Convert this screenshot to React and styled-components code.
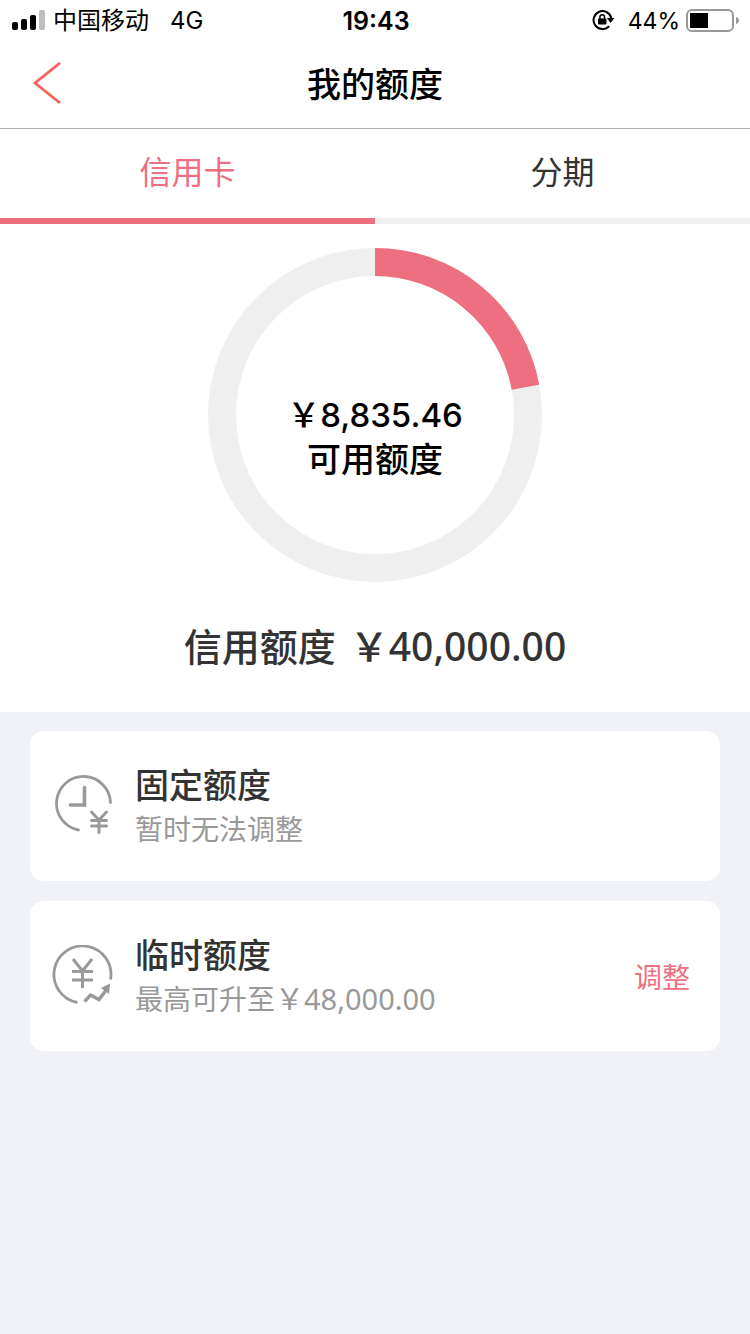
import React, { useState } from "react";
import styled, { createGlobalStyle } from "styled-components";

const GlobalStyle = createGlobalStyle`
  * {
    box-sizing: border-box;
  }
  body {
    margin: 0;
    background-color: #f1f2f7;
    font-family: "Noto Sans", "Noto Sans CJK SC", sans-serif;
  }
  button {
    padding: 0;
    border: none;
    background: none;
    font-family: inherit;
    cursor: pointer;
  }
`;

const Page = styled.div`
  display: flex;
  flex-direction: column;
`;

const StatusBar = styled.div`
  display: grid;
  grid-template-columns: 1fr auto 1fr;
  align-items: center;
  height: 40px;
  padding: 0 10px 0 12px;
  background-color: white;
  color: black;
  font-family: "Inter", "Noto Sans CJK SC", sans-serif;
  font-size: 24px;
  line-height: 42px;
`;

const StatusGroup = styled.div`
  display: flex;
  align-items: center;
  gap: ${(props) => (props.$right ? 6 : 7)}px;
  justify-content: ${(props) => (props.$right ? "flex-end" : "flex-start")};
`;

const Carrier = styled.span`
  margin-right: 14px;
`;

const Clock = styled.span`
  font-size: 25px;
  font-weight: 600;
`;

const Percent = styled.span`
  margin-left: 6px;
  font-size: 23px;
`;

const NavBar = styled.header`
  display: grid;
  grid-template-columns: 1fr auto 1fr;
  align-items: center;
  height: 89px;
  padding: 0 32px;
  background-color: white;
  border-bottom: 1px solid #b2b2b2;
`;

const BackButton = styled.button`
  display: flex;
  width: 30px;
`;

const Title = styled.h1`
  margin: 0;
  color: black;
  font-size: 34px;
  font-weight: 500;
  line-height: 48px;
`;

const Tabs = styled.nav`
  display: flex;
  background-color: white;
`;

const Tab = styled.button`
  flex: 1;
  height: 95px;
  padding-bottom: 4px;
  border-bottom: 6px solid ${(props) => (props.$active ? "#ee6f80" : "#f0f0f0")};
  color: ${(props) => (props.$active ? "#ee6f80" : "#333333")};
  font-size: 32px;
  line-height: 44px;
`;

const Summary = styled.section`
  display: flex;
  flex-direction: column;
  align-items: center;
  gap: 36px;
  padding: 24px 0 38px;
  background-color: white;
`;

const Ring = styled.div`
  display: grid;
  place-items: center;
`;

const RingChart = styled.svg`
  grid-area: 1 / 1;
  display: block;
`;

const RingText = styled.div`
  grid-area: 1 / 1;
  display: flex;
  flex-direction: column;
  align-items: center;
  padding-top: 44px;
  color: black;
  font-size: 34px;
  font-weight: 500;
  line-height: 44px;
`;

const Available = styled.span`
  font-family: "Inter", "Noto Sans CJK SC", sans-serif;
  font-size: 33px;
`;

const Total = styled.div`
  display: flex;
  align-items: center;
  gap: 14px;
  color: #333333;
  font-size: 38px;
  font-weight: 500;
  line-height: 56px;
`;

const Amount = styled.span`
  font-size: 39px;
`;

const CardList = styled.main`
  display: flex;
  flex-direction: column;
  gap: 20px;
  padding: 19px 30px;
`;

const Card = styled.article`
  display: flex;
  align-items: center;
  gap: 21px;
  height: 150px;
  padding: 2px 30px 0 20px;
  background-color: white;
  border-radius: 14px;
`;

const CardBody = styled.div`
  flex: 1;
`;

const CardTitle = styled.h2`
  margin: 0;
  color: #333333;
  font-size: 34px;
  font-weight: 500;
  line-height: 44px;
`;

const CardNote = styled.p`
  margin: 0;
  color: #999999;
  font-size: 28px;
  line-height: 44px;
`;

const NoteAmount = styled.span`
  font-size: 29px;
`;

const AdjustButton = styled.button`
  color: #ee6f80;
  font-size: 28px;
  line-height: 44px;
`;

const SignalIcon = () => (
  <svg width="34" height="22" viewBox="0 0 34 22">
    <rect x="0" y="12" width="6" height="8" rx="2" />
    <rect x="9" y="9" width="6" height="11" rx="2" />
    <rect x="18" y="5" width="6" height="15" rx="2" />
    <rect x="27" y="0" width="6" height="20" rx="2" fill="#bfbfbf" />
  </svg>
);

const RotationLockIcon = () => (
  <svg width="24" height="22" viewBox="0 0 24 22" fill="none" stroke="black" strokeWidth="2">
    <path d="M17.2 16.2A9 9 0 1 1 19.3 8" />
    <path d="M14.8 8h7.6l-3.8 5z" fill="black" stroke="none" />
    <rect x="6" y="8.5" width="8.4" height="6" rx="1" fill="black" stroke="none" />
    <path d="M7.9 9V7a2.3 2.3 0 0 1 4.6 0v2" strokeWidth="1.5" />
  </svg>
);

const BatteryIcon = () => (
  <svg width="54" height="24" viewBox="0 0 54 24">
    <rect x="1" y="1" width="46" height="21" rx="5" fill="none" stroke="#999999" strokeWidth="2" />
    <rect x="4" y="4" width="18" height="15" fill="black" />
    <path d="M50 8c4 1 4 6 0 7z" fill="#999999" />
  </svg>
);

const BackIcon = () => (
  <svg width="30" height="44" viewBox="0 0 30 44" fill="none" stroke="#f9605b" strokeWidth="2.8">
    <path d="M28 1L3 21l25 20" />
  </svg>
);

const FixedIcon = () => (
  <svg width="64" height="64" viewBox="0 0 64 64" fill="none" stroke="#999999" strokeWidth="3" strokeLinecap="round">
    <path d="M60.5 27.500A27 27 0 1 0 28.500 55" strokeWidth="2.8" />
    <path d="M34.5 12.500V30h-14" strokeWidth="3.6" />
    <path d="M41.5 37l7.5 8 7.5-8M49 45v12.500M41.500 45.500h15M41.500 51h15" />
  </svg>
);

const TempIcon = () => (
  <svg width="64" height="64" viewBox="0 0 64 64" fill="none" stroke="#999999" strokeWidth="3">
    <path d="M60.5 34.5A28.5 28.5 0 1 0 27.5 57.500" strokeWidth="2.8" />
    <path d="M23 14l9.500 12 9.500-12M32.500 26v17M22 26.500h21M22 35h21" />
    <path d="M34.5 56.500l6-6.500 8.500 4.500 8-10.500" strokeWidth="3.4" />
    <path d="M60 38.500l-9 4.500 8 6z" fill="#999999" stroke="none" />
  </svg>
);

const RADIUS = 153;
const CIRCLE = 2 * Math.PI * RADIUS;

const available = 8835.46;
const limit = 40000;

const money = (value) =>
  "￥" + value.toLocaleString("en-US", { minimumFractionDigits: 2 });

const tabs = ["信用卡", "分期"];

const cards = [
  { title: "固定额度", note: "暂时无法调整", icon: <FixedIcon /> },
  { title: "临时额度", note: "最高可升至", amount: 48000, icon: <TempIcon />, action: "调整" },
];

function App() {
  const [activeTab, setActiveTab] = useState(0);

  return (
    <Page>
      <GlobalStyle />
      <StatusBar>
        <StatusGroup>
          <SignalIcon />
          <Carrier>中国移动</Carrier>
          <span>4G</span>
        </StatusGroup>
        <Clock>19:43</Clock>
        <StatusGroup $right>
          <RotationLockIcon />
          <Percent>44%</Percent>
          <BatteryIcon />
        </StatusGroup>
      </StatusBar>

      <NavBar>
        <BackButton aria-label="返回">
          <BackIcon />
        </BackButton>
        <Title>我的额度</Title>
      </NavBar>

      <Tabs>
        {tabs.map((tab, index) => (
          <Tab key={tab} $active={index === activeTab} onClick={() => setActiveTab(index)}>
            {tab}
          </Tab>
        ))}
      </Tabs>

      <Summary>
        <Ring>
          <RingChart width="334" height="334" viewBox="0 0 334 334" fill="none" strokeWidth="28">
            <circle cx="167" cy="167" r={RADIUS} stroke="#efefef" />
            <circle
              cx="167"
              cy="167"
              r={RADIUS}
              stroke="#ee6f80"
              strokeDasharray={`${(CIRCLE * available) / limit} ${CIRCLE}`}
              transform="rotate(-90 167 167)"
            />
          </RingChart>
          <RingText>
            <Available>{money(available)}</Available>
            <span>可用额度</span>
          </RingText>
        </Ring>
        <Total>
          <span>信用额度</span>
          <Amount>{money(limit)}</Amount>
        </Total>
      </Summary>

      <CardList>
        {cards.map((card) => (
          <Card key={card.title}>
            {card.icon}
            <CardBody>
              <CardTitle>{card.title}</CardTitle>
              <CardNote>
                {card.note}
                {card.amount && <NoteAmount>{money(card.amount)}</NoteAmount>}
              </CardNote>
            </CardBody>
            {card.action && <AdjustButton>{card.action}</AdjustButton>}
          </Card>
        ))}
      </CardList>
    </Page>
  );
}

export default App;
